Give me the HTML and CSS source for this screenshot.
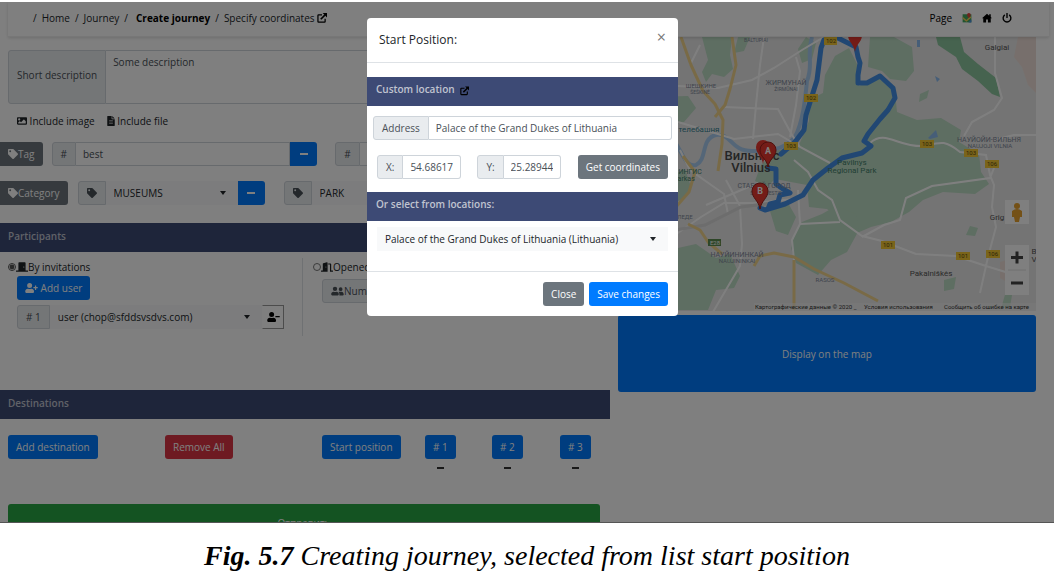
FILE: index.html
```html
<!DOCTYPE html>
<html lang="en">
<head>
<meta charset="utf-8">
<title>Create journey</title>
<link rel="stylesheet" href="styles.css">
</head>
<body>
<svg class="defs" aria-hidden="true">
  <symbol id="i-link" viewBox="0 0 16 16"><path d="M8 3H2.5A1 1 0 0 0 1.500 4v9.500a1 1 0 0 0 1 1H12a1 1 0 0 0 1-1V9" fill="none" stroke="currentColor" stroke-width="2"/><path d="M6 10 13 3" stroke="currentColor" stroke-width="2.600"/><path d="M9 0h7v7z" fill="currentColor"/></symbol>
  <symbol id="i-tag" viewBox="0 0 512 512"><path fill="currentColor" d="M0 252V48C0 21 21 0 48 0h204a48 48 0 0 1 34 14l212 212c19 19 19 49 0 68L294 498c-19 19-49 19-68 0L14 286A48 48 0 0 1 0 252zM112 64a48 48 0 1 0 0 96 48 48 0 0 0 0-96z"/></symbol>
  <symbol id="i-image" viewBox="0 0 512 512"><path fill="currentColor" fill-rule="evenodd" d="M464 448H48c-27 0-48-21-48-48V112c0-27 21-48 48-48h416c27 0 48 21 48 48v288c0 27-21 48-48 48zM112 120a56 56 0 1 0 0 112 56 56 0 0 0 0-112zM64 384h384V272l-88-88c-4-4-12-4-16 0L208 320l-56-56c-4-4-12-4-16 0L64 336z"/></symbol>
  <symbol id="i-file" viewBox="0 0 384 512"><path fill="currentColor" fill-rule="evenodd" d="M224 136V0H24C11 0 0 11 0 24v464c0 13 11 24 24 24h336c13 0 24-11 24-24V160H248c-13 0-24-11-24-24zM96 224h192v32H96zm0 64h192v32H96zm0 64h192v32H96zM256 0v128h128z"/></symbol>
  <symbol id="i-user-plus" viewBox="0 0 640 512"><path fill="currentColor" d="M624 208h-64v-64c0-9-7-16-16-16h-32c-9 0-16 7-16 16v64h-64c-9 0-16 7-16 16v32c0 9 7 16 16 16h64v64c0 9 7 16 16 16h32c9 0 16-7 16-16v-64h64c9 0 16-7 16-16v-32c0-9-7-16-16-16zM224 256a128 128 0 1 0 0-256 128 128 0 0 0 0 256zm90 32h-17a175 175 0 0 1-146 0h-17C60 288 0 348 0 422v42c0 27 21 48 48 48h352c27 0 48-21 48-48v-42c0-74-60-134-134-134z"/></symbol>
  <symbol id="i-user-minus" viewBox="0 0 640 512"><path fill="currentColor" d="M624 208H432c-9 0-16 7-16 16v32c0 9 7 16 16 16h192c9 0 16-7 16-16v-32c0-9-7-16-16-16zM224 256a128 128 0 1 0 0-256 128 128 0 0 0 0 256zm90 32h-17a175 175 0 0 1-146 0h-17C60 288 0 348 0 422v42c0 27 21 48 48 48h352c27 0 48-21 48-48v-42c0-74-60-134-134-134z"/></symbol>
  <symbol id="i-users" viewBox="0 0 640 512"><path fill="currentColor" d="M192 256a112 112 0 1 0 0-224 112 112 0 0 0 0 224zm77 32h-8a155 155 0 0 1-138 0h-8C51 288 0 339 0 403v29c0 27 21 48 48 48h288c27 0 48-21 48-48v-29c0-64-51-115-115-115zM480 256a96 96 0 1 0 0-192 96 96 0 0 0 0 192zm48 32h-4a127 127 0 0 1-88 0h-4c-20 0-39 6-56 16 25 27 40 63 40 102v74h176c27 0 48-21 48-48 0-80-50-144-112-144z"/></symbol>
  <symbol id="i-door" viewBox="0 0 640 512"><path fill="currentColor" fill-rule="evenodd" d="M624 448H512V51c0-28-22-51-50-51H178c-28 0-50 23-50 51v397H16c-9 0-16 7-16 16v32c0 9 7 16 16 16h608c9 0 16-7 16-16v-32c0-9-7-16-16-16zM416 288a32 32 0 1 1 0-64 32 32 0 0 1 0 64z"/></symbol>
  <symbol id="i-door-open" viewBox="0 0 640 512"><path fill="currentColor" fill-rule="evenodd" d="M624 448h-80V114c0-28-22-50-48-50H384v64h96v384h144c9 0 16-7 16-16v-32c0-9-7-16-16-16zM312 1 120 52c-14 4-24 17-24 31v365H16c-9 0-16 7-16 16v32c0 9 7 16 16 16h336V33c0-22-20-37-40-32zm-48 287c-13 0-24-14-24-32s11-32 24-32 24 14 24 32-11 32-24 32z"/></symbol>
  <symbol id="i-home" viewBox="0 0 16 16"><path fill="currentColor" d="M8 1 0 8.500h2V15h4.500v-4.500h3V15H14V8.500h2l-2-2V2h-2.500v2.200z"/></symbol>
  <symbol id="i-power" viewBox="0 0 16 16"><path d="M4.500 3a6.200 6.200 0 1 0 7 0M8 0v8" fill="none" stroke="currentColor" stroke-width="2.200"/></symbol>
  <symbol id="i-map" viewBox="0 0 16 16"><path fill="#45a861" d="M1 2h14v13H1z"/><path fill="#f3cf55" d="m1 6 6 5 6-6 2 2-8 7-6-5z"/><path fill="#4a90e2" d="m10 15 5-5v5z"/><path fill="#e0483b" d="M11 0a3 3 0 0 1 3 3c0 2-3 5-3 5S8 5 8 3a3 3 0 0 1 3-3z"/></symbol>
</svg>

<figure class="figure">
  <div class="screen">
    <header class="topbar">
      <nav class="crumbs" aria-label="Breadcrumb">
        <span>/</span><a href="#">Home</a><span>/</span><a href="#">Journey</a><span>/</span><a class="current" href="#">Create journey</a><span>/</span><a href="#">Specify coordinates <svg class="icon"><use href="#i-link"/></svg></a>
      </nav>
      <nav class="tools" aria-label="Page">
        <a href="#">Page</a>
        <a href="#" aria-label="Map"><svg class="icon"><use href="#i-map"/></svg></a>
        <a href="#" aria-label="Main page"><svg class="icon"><use href="#i-home"/></svg></a>
        <a href="#" aria-label="Log out"><svg class="icon"><use href="#i-power"/></svg></a>
      </nav>
    </header>

    <main class="columns">
      <form class="journey">
        <div class="group description">
          <label class="addon" for="desc">Short description</label>
          <textarea id="desc" class="field">Some description</textarea>
        </div>
        <div class="includes">
          <a href="#"><svg class="icon"><use href="#i-image"/></svg> Include image</a>
          <a href="#"><svg class="icon file"><use href="#i-file"/></svg> Include file</a>
        </div>
        <div class="line tags">
          <button type="button" class="btn gray flush"><svg class="icon"><use href="#i-tag"/></svg>Tag</button>
          <div class="group"><label class="addon" for="tag1">#</label><input id="tag1" class="field" value="best"><button type="button" class="btn blue dash" aria-label="Remove tag"></button></div>
          <div class="group"><label class="addon" for="tag2">#</label><input id="tag2" class="field" value="travel"><button type="button" class="btn blue dash" aria-label="Remove tag"></button></div>
        </div>
        <div class="line categories">
          <button type="button" class="btn gray flush"><svg class="icon"><use href="#i-tag"/></svg>Category</button>
          <div class="group"><label class="addon" for="cat1" aria-label="Category 1"><svg class="icon"><use href="#i-tag"/></svg></label><span class="pick"><select id="cat1"><option>MUSEUMS</option></select></span><button type="button" class="btn blue dash" aria-label="Remove category"></button></div>
          <div class="group"><label class="addon" for="cat2" aria-label="Category 2"><svg class="icon"><use href="#i-tag"/></svg></label><span class="pick"><select id="cat2"><option>PARK</option></select></span><button type="button" class="btn blue dash" aria-label="Remove category"></button></div>
        </div>

        <h2 class="bar">Participants</h2>
        <div class="access">
          <section class="invited">
            <label class="choice"><input type="radio" name="access" checked><svg class="icon door"><use href="#i-door"/></svg>By invitations</label>
            <button type="button" class="btn blue"><svg class="icon wide"><use href="#i-user-plus"/></svg> Add user</button>
            <div class="group user"><label class="addon" for="user1"># 1</label><span class="pick"><select id="user1"><option>user (chop@sfddsvsdvs.com)</option></select></span><button type="button" class="remove-user" aria-label="Remove user"><svg class="icon wide"><use href="#i-user-minus"/></svg></button></div>
          </section>
          <section class="opened">
            <label class="choice"><input type="radio" name="access"><svg class="icon door"><use href="#i-door-open"/></svg>Opened</label>
            <div class="group"><label class="addon" for="num"><svg class="icon wide"><use href="#i-users"/></svg>Number</label><input id="num" class="field"></div>
          </section>
        </div>

        <h2 class="bar">Destinations</h2>
        <div class="stops">
          <div><button type="button" class="btn blue">Add destination</button></div>
          <div><button type="button" class="btn red">Remove All</button></div>
          <div><button type="button" class="btn blue">Start position</button></div>
          <div class="stop"><button type="button" class="btn blue"># 1</button><button type="button" class="drop" aria-label="Remove 1"></button></div>
          <div class="stop"><button type="button" class="btn blue"># 2</button><button type="button" class="drop" aria-label="Remove 2"></button></div>
          <div class="stop"><button type="button" class="btn blue"># 3</button><button type="button" class="drop" aria-label="Remove 3"></button></div>
        </div>
        <button type="submit" class="btn green">Отправить</button>
      </form>

      <aside class="side">
        <svg class="map" viewBox="618 37 418 274" preserveAspectRatio="xMidYMid slice" role="img" aria-label="Map of Vilnius">
          <path fill="#e8e8e8" d="M618 37h418v274H618z"/>
          <g fill="#bcdcc4">
            <path d="M702 37h30l-2 18 3 14-9 8-12-3-6 8-4-10 6-12zM618 98l70-2 8 12-12 14-16 4h-50zM738 37h12l-6 14-10 2zM675 175l10-6 6 18-8 12-10 4z"/>
            <path d="M835 56l14-8 8 16 2 22 22-8 14 14 2 20 20 8 24-2 20 12-2 12 20 12 2 18 8 12-14 10-32-2-20 8-14 12-18 10-20 5-14 6-12-2-6-12-12-10-18-2-2-22-32-6-8 8-12-6 6-16 14-14 24-6 10-24-2-20 16-8 2-18z"/>
            <path d="M870 37h24l18 10 2 24-8 10-16-2-8-8-14-4zM806 37l10 6-4 16-10 4-4-14zM802 222l20-8 14-8 20 8 3 16-12 22-16 8-13 15-22-12-5-15 4-16zM678 248l18-4 20 14 14-4 10 22-6 12-18 2-8 20h-34zM770 211l18-8 8 14-8 18-12-4zM944 280l12-3-2 12-10 2zM1006 291l6 4-2 12-9 2zM970 226l8 2-3 8-9-1zM920 94l9-4-2 8-8 4z"/>
          </g>
          <path fill="#8dc69e" d="M936 37h24l4 15 14 12 18 14 4 19-8-3-14-13-16-12-6-12-18-12z"/>
          <path fill="#efdfd8" d="M1018 37h18v56l-8-8-6-18-8-10zM1000 262l14-4 6 18-6 10-14-8z"/>
          <path fill="none" stroke="#a9cdf0" stroke-width="4" stroke-linejoin="round" d="M812 37c-6 20 2 26-5 44-2 20-4 40-12 56-12 14-28 14-43 14-22 0-20-18-36-16-16 4-8 24-20 30-14 3-14-22-30-32"/>
          <path fill="#8dbdf0" d="M917 40h3v7h-3zM935 76l5 3-3 3zM928 138l8-8 2 7-8 2z"/>
          <path fill="none" stroke="#fff" stroke-width="2" d="M678 122l40 12 16 5 44-5 22 13 30 16M678 86l40 2 34-8 22-12 28-18 22-13M764 37l-4 28-4 40-3 34M724 107l24 1 30 1 14 26 8 12M796 57l4 14-4 34-6 32M675 235l26-18 23-14 30 0 40-4M726 180l14 26 2 38-2 22-20 34-7 12M794 160l14 12 10 18 14 10 8 20 22 16 20 5 34 13 40 2 30 10 26 8M798 190l2 34-8 16 2 20M800 224l40-2M862 237l22-12 16-5 6-22 26-12 58-8 4-10M870 143c16-14 28 5 55 3 16-4 20-6 35 6l26 3 4 20 4 10-2 22 4 20-8 30-8 36M995 37l0 36 7 25-8 12-22 12-8 14M994 140l20-5h22M680 150l10 20 34 24 4 20M706 205l52-22M700 45l-10 20"/>
          <path fill="none" stroke="#dadada" stroke-width="3" d="M675 230l30-5 36-18 40-5"/>
          <path fill="none" stroke="#f2d58c" stroke-width="3" stroke-linejoin="round" d="M681 37l10 28 12 26 12 13 8 16-1 24-4 27M732 37l4 28-6 24-5 16-10 12M675 208l14-16 6-20-12-16M688 224l12 6 8 12 14 12M754 266l6-10 14-3 20 4 20 12 30 14 34 18M794 260v50"/>
          <path fill="none" stroke="#428fe6" stroke-width="5" stroke-linecap="round" stroke-linejoin="round" d="M856 47L858 57 860 63 858 75V83H867L880 76 893 88 895 98 888 110 880 119 868 134 864 141 871 146 862 153 842 158 828 168 813 180 803 195 785 204 765 210 760 208M854 46L836 37 824 40 821 48 817 80 806 115 804 130 795 142 781 154M768 168L776 169V184L783 189 790 193 780 195 778 202 770 204 768 209"/>
          <g text-anchor="middle" fill="#7f8899">
            <text x="756" y="42" font-size="5">BALTUPIAI</text>
            <text x="701" y="88" font-size="6">ШЕШКИНЕ</text><text x="700" y="94" font-size="5">ŠEŠKINĖ</text>
            <text x="786" y="85" font-size="7">ЖИРМУНАЙ</text><text x="786" y="91" font-size="5">ŽIRMŪNAI</text>
            <text x="764" y="188" font-size="7">СТАРЫЙ ГОРОД</text><text x="766" y="195" font-size="5">SENAMIESTIS</text>
            <text x="685" y="219" font-size="6">ЛЕДЕ</text>
            <text x="737" y="257" font-size="7">НАУЙИНИНКАЙ</text><text x="737" y="263" font-size="6">NAUJININKAI</text>
            <text x="825" y="282" font-size="6">RASOS</text>
            <text x="989" y="142" font-size="7">НАУЙОЙИ-ВИЛЬНЯ</text><text x="990" y="148" font-size="6">NAUJOJI VILNIA</text>
          </g>
          <g text-anchor="middle">
            <text x="752" y="160" font-size="13" fill="#4b4b4b" font-weight="500">Вильнюс</text>
            <text x="751" y="172" font-size="13" fill="#4b4b4b" font-weight="500">Vilnius</text>
            <text x="997" y="50" font-size="8" fill="#555">Galgiai</text>
            <text x="931" y="276" font-size="8" fill="#555">Pakalniškės</text>
            <text x="997" y="220" font-size="8" fill="#555">Grig</text>
            <text x="1034" y="254" font-size="8" fill="#555">B</text><text x="1034" y="262" font-size="8" fill="#555">V</text>
            <text x="852" y="165" font-size="8" fill="#43806a">Pavilnys</text>
            <text x="852" y="173" font-size="8" fill="#43806a">Regional Park</text>
            <text x="699" y="132" font-size="8" fill="#357f90">телебашня</text>
            <text x="688" y="174" font-size="7" fill="#43806a">ВИНГИС</text><text x="684" y="181" font-size="7" fill="#43806a">Parkas</text>
          </g>
          <g text-anchor="middle" font-size="6">
            <path fill="#f4c835" d="M824 37h13v8h-13zM804 94h14v8h-14zM784 142h14v8h-14zM920 140h14v8h-14zM964 149h14v8h-14zM985 160h14v8h-14zM881 241h14v8h-14zM956 252h14v8h-14zM986 250h14v8h-14z"/>
            <path fill="#5d8c50" d="M708 239h13v7h-13z"/>
            <g fill="#5b4a10"><text x="831" y="43">102</text><text x="811" y="100">102</text><text x="791" y="148">103</text><text x="927" y="146">103</text><text x="971" y="155">103</text><text x="992" y="166">106</text><text x="888" y="247">101</text><text x="963" y="258">101</text><text x="993" y="256">106</text></g>
            <text x="715" y="245" fill="#fff">E28</text>
          </g>
          <g text-anchor="middle" font-size="9" fill="#e8382f">
            <path id="pin" d="M855 52c-1-8-7-10-7-17a7 7 0 0 1 14 0c0 7-6 9-7 17z"/>
            <use href="#pin" x="-92" y="112"/>
            <path stroke="#9c211b" stroke-width="1" d="M768 167c-1-8-8-10-8-17a8 8 0 0 1 16 0c0 7-7 9-8 17zM760 209c-1-8-8-11-8-18a8 8 0 0 1 16 0c0 7-7 10-8 18z"/>
            <g fill="#fff" font-weight="700"><text x="768" y="154">A</text><text x="760" y="194">B</text></g>
          </g>
          <path fill="#fff" d="M1005 200h24v24h-24zM1005 245h24v50h-24z"/>
          <path stroke="#e0e0e0" d="M1008 270h18"/>
          <path stroke="#444" stroke-width="3" d="M1011 257.500h12M1017 251.500v12M1011 283h12"/>
          <g fill="#e8a22e"><circle cx="1017" cy="206" r="3"/><path d="M1012 211q5-4 10 0v6h-2l-1 5h-4l-1-5h-2z"/></g>
          <path fill="#f5f5f5" d="M754 303h282v8H754z" opacity=".5"/>
          <g font-size="6" fill="#333">
            <text x="755" y="309">Картографические данные © 2020 _</text>
            <text x="864" y="309">Условия использования</text>
            <text x="944" y="309">Сообщить об ошибке на карте</text>
          </g>
        </svg>
        <button type="button" class="btn blue display">Display on the map</button>
      </aside>
    </main>

    <div class="backdrop">
      <div class="modal" role="dialog" aria-modal="true" aria-labelledby="modal-title">
        <div class="modal-head"><h1 id="modal-title">Start Position:</h1><button type="button" class="close" aria-label="Close dialog">×</button></div>
        <div class="modal-body">
          <h2 class="bar">Custom location &nbsp;<svg class="icon"><use href="#i-link"/></svg></h2>
          <div class="group address"><label class="addon" for="addr">Address</label><input id="addr" class="field" value="Palace of the Grand Dukes of Lithuania"></div>
          <div class="coords">
            <div class="group"><label class="addon" for="x">X:</label><input id="x" class="field" value="54.6861786"></div>
            <div class="group"><label class="addon" for="y">Y:</label><input id="y" class="field" value="25.2894486"></div>
            <button type="button" class="btn gray">Get coordinates</button>
          </div>
          <h2 class="bar">Or select from locations:</h2>
          <span class="pick location"><select aria-label="Location"><option>Palace of the Grand Dukes of Lithuania (Lithuania)</option></select></span>
        </div>
        <div class="modal-foot"><button type="button" class="btn gray">Close</button><button type="button" class="btn blue">Save changes</button></div>
      </div>
    </div>
  </div>
  <figcaption><b>Fig. 5.7</b> Creating journey, selected from list start position</figcaption>
</figure>
</body>
</html>
```

FILE: styles.css
```css
* { box-sizing: border-box; }

body {
  margin: 0;
  background: #fff;
  color: #212529;
  font: 10px/18px "Open Sans", "Noto Sans", sans-serif;
}

a { color: inherit; text-decoration: none; }
button, input, select, textarea { font: inherit; color: inherit; margin: 0; }
h1, h2 { margin: 0; }

.defs { position: absolute; width: 0; height: 0; }
.icon { width: 10px; height: 10px; vertical-align: -1px; }
.icon.wide { width: 13px; }
.icon.file { width: 8px; }
.icon.door { width: 12px; height: 10px; }

.figure { margin: 0; padding-top: 2px; }

.screen {
  position: relative;
  height: calc(100vh - 54px);
  margin-right: 7px;
  overflow: hidden;
  border-bottom: 1px solid #555;
  background: #fff;
}

figcaption {
  margin-right: 7px;
  padding-top: 16px;
  color: #000;
  font: italic 28px/34px "Liberation Serif", serif;
  text-align: center;
}

/* Top bar */
.topbar {
  position: relative;
  display: flex;
  align-items: center;
  justify-content: space-between;
  height: 35px;
  margin: 0 5px 0 8px;
  padding: 0 37px 2px 25px;
  border-bottom: 1px solid #eee;
  box-shadow: 0 1px 3px rgba(0, 0, 0, .15);
}
.crumbs { display: flex; gap: 5px; }
.crumbs .icon { color: #000; }
.crumbs .current { color: #000; font-weight: 700; margin-left: 3px; }
.tools { display: flex; align-items: center; gap: 10px; color: #000; }

/* Page columns */
.columns { display: grid; grid-template-columns: 610fr 444fr; }
.journey { padding-top: 13px; }
.side { padding: 0 18px 0 8px; }

/* Controls */
.btn {
  height: 24px;
  padding: 0 8px;
  border: 0;
  border-radius: 3px;
  color: #fff;
  line-height: 22px;
  white-space: nowrap;
}
.blue { background: #007bff; }
.gray { background: #6c757d; }
.red { background: #dc3545; }
.green { background: #28a745; }

.group { display: flex; min-width: 0; height: 24px; }
.addon {
  display: flex;
  align-items: center;
  flex: none;
  padding: 0 8px;
  border: 1px solid #ced4da;
  border-radius: 3px 0 0 3px;
  background: #e9ecef;
  color: #495057;
}
.field {
  flex: 1;
  min-width: 0;
  padding: 0 7px;
  border: 1px solid #ced4da;
  border-left: 0;
  border-radius: 0 3px 3px 0;
  background: #fff;
  color: #495057;
}
textarea.field { padding-top: 2px; resize: none; }

.pick { display: grid; flex: 1; align-items: center; min-width: 0; }
.pick > select {
  grid-area: 1 / 1;
  width: 100%;
  height: 24px;
  padding: 0 24px 0 8px;
  border: 0;
  appearance: none;
  background: #f8f9fa;
  color: #212529;
}
.pick::after {
  content: "";
  grid-area: 1 / 1;
  justify-self: end;
  margin-right: 12px;
  border: 3px solid transparent;
  border-top: 4px solid #212529;
  border-bottom: 0;
  pointer-events: none;
}

.dash { display: grid; place-items: center; width: 27px; border-radius: 0 3px 3px 0; }
.dash::before { content: ""; width: 8px; height: 2px; background: #fff; }
.group .field:not(:last-child) { border-radius: 0; }

.bar {
  height: 29px;
  padding: 3px 9px;
  background: #3d4a75;
  color: #c0c4d0;
  font-size: 10px;
  font-weight: 600;
  line-height: 18px;
}
.journey .bar { padding: 4px 8px; }

/* Journey form */
.description { height: 54px; margin: 0 10px 0 8px; }
.description .addon { padding-bottom: 5px; }
.includes { display: flex; gap: 12px; padding: 8px 17px 12px; }
.line { display: flex; gap: 10px; padding-right: 9px; }
.flush { border-radius: 0 3px 3px 0; }
.tags { gap: 9px; margin-bottom: 15px; }
.tags .group { flex: 1; }
.tags .group + .group { margin-left: 9px; }
.categories { margin-bottom: 18px; }
.categories .group { flex: 0 0 187px; }
.categories .group + .group { flex: 1; margin-left: 9px; }

.access { display: grid; grid-template-columns: 303fr 307fr; height: 78px; margin: 6px 0 54px; }
.choice { display: flex; align-items: center; height: 18px; }
.choice input { width: 8px; height: 8px; margin: 0; accent-color: #555; }
.invited { padding: 0 18px 0 8px; border-right: 1px solid #dee2e6; }
.invited .btn { display: block; margin: 0 9px 5px; }
.user { margin-left: 9px; }
.remove-user { width: 22px; padding: 0; border: 1px solid #999; border-left-color: #fff; background: #fff; color: #000; }
.opened { padding-left: 10px; }
.opened .group { margin: 3px 10px 0 9px; }

.stops { display: grid; grid-template-columns: 157fr 157fr 103fr 67fr 68fr 50fr; padding: 16px 0 0 8px; }
.stop { display: grid; justify-items: center; justify-content: start; }
.drop { width: 7px; height: 2px; margin-top: 8px; padding: 0; border: 0; background: #333; }
.journey > .green { display: block; width: calc(100% - 18px); height: 38px; margin: 35px 10px 0 8px; }

/* Map column */
.map { display: block; width: 100%; font-family: Roboto, sans-serif; }
.display { width: 100%; height: 77px; margin-top: 4px; }

/* Dialog */
.backdrop {
  position: absolute;
  inset: 0;
  padding: 16px 9px 0 0;
  background: rgba(0, 0, 0, .5);
}
.modal { width: 311px; margin: 0 auto; border-radius: 4px; background: #fff; }
.modal-head {
  display: flex;
  justify-content: space-between;
  height: 45px;
  padding: 13px 12px;
  border-bottom: 1px solid #dee2e6;
}
.modal-head h1 { font-size: 12px; font-weight: 500; line-height: 18px; }
.close { align-self: start; padding: 0; border: 0; background: none; color: #777; font-size: 16px; line-height: 12px; }
.modal-body { padding-top: 14px; }
.modal-body .icon { width: 9px; color: #000; vertical-align: -3px; }
.address { margin: 10px 6px 15px; }
.coords { display: flex; justify-content: space-between; margin: 0 10px 13px; }
.coords .group { width: 84px; }
.location { margin: 6px 10px 20px; }
.modal-foot { display: flex; justify-content: flex-end; gap: 5px; padding: 10px; border-top: 1px solid #dee2e6; }
```
